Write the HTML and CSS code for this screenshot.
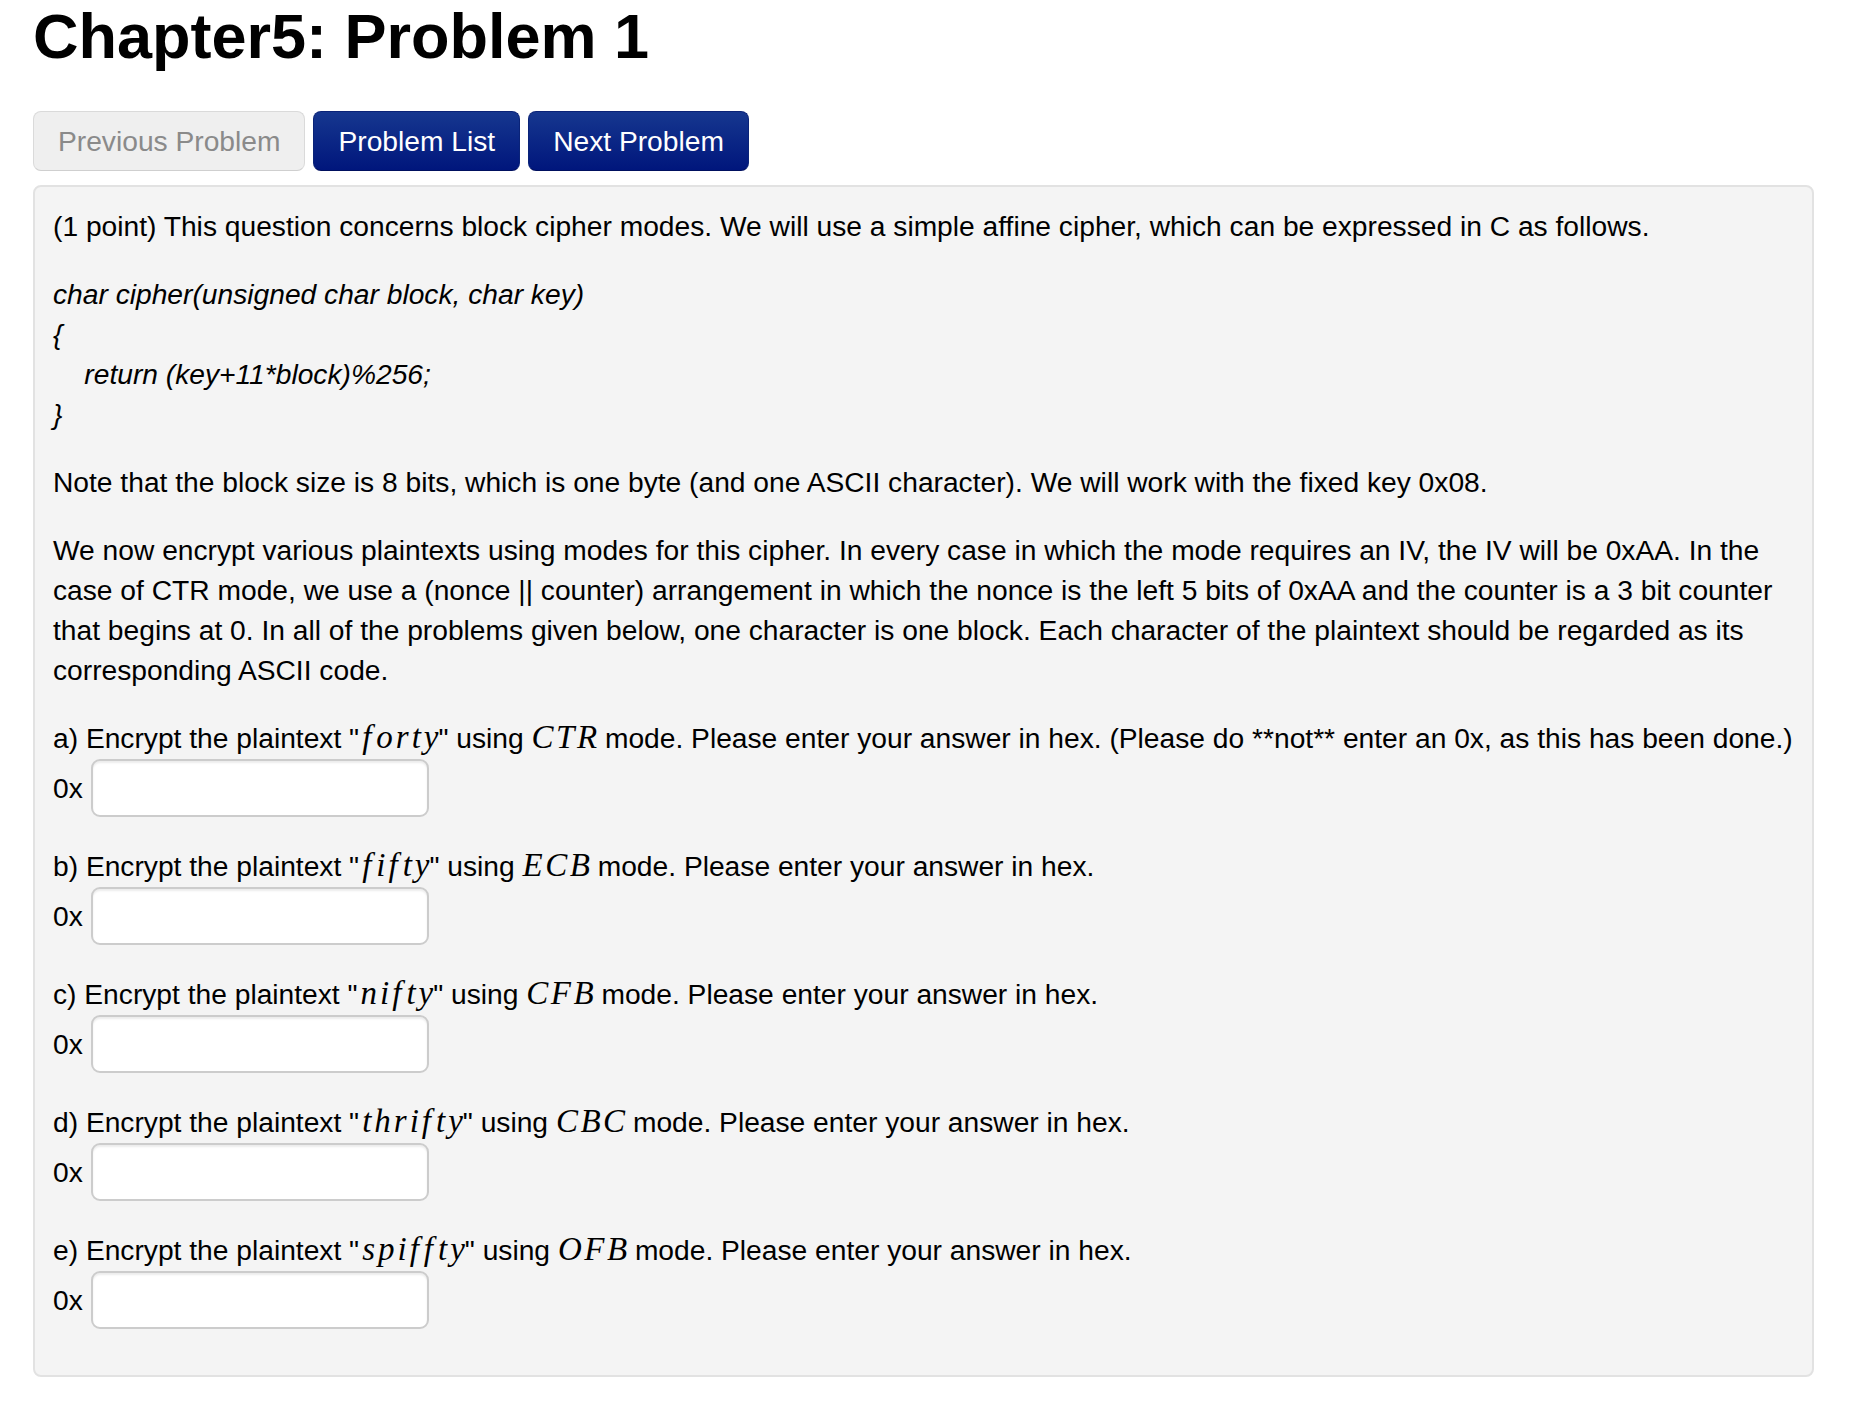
FILE: index.html
```html
<!DOCTYPE html>
<html lang="en">
<head>
<meta charset="utf-8">
<title>Chapter5: Problem 1</title>
<link rel="stylesheet" href="styles.css">
</head>
<body>
<div class="page">
  <h1 class="title">Chapter5: Problem 1</h1>
  <div class="nav">
    <span class="btn btn-disabled">Previous Problem</span>
    <a class="btn btn-primary" href="#">Problem List</a>
    <a class="btn btn-primary" href="#">Next Problem</a>
  </div>
  <div class="well">
    <p class="para">(1 point) This question concerns block cipher modes. We will use a simple affine cipher, which can be expressed in C as follows.</p>
    <p class="para code">char cipher(unsigned char block, char key)<br>{<br>&nbsp;&nbsp;&nbsp;&nbsp;return (key+11*block)%256;<br>}</p>
    <p class="para">Note that the block size is 8 bits, which is one byte (and one ASCII character). We will work with the fixed key 0x08.</p>
    <p class="para">We now encrypt various plaintexts using modes for this cipher. In every case in which the mode requires an IV, the IV will be 0xAA. In the case of CTR mode, we use a (nonce || counter) arrangement in which the nonce is the left 5 bits of 0xAA and the counter is a 3 bit counter that begins at 0. In all of the problems given below, one character is one block. Each character of the plaintext should be regarded as its corresponding ASCII code.</p>

    <div class="part">
      <div class="question">a) Encrypt the plaintext "<span class="math word"><span class="f">f</span>orty</span>" using <span class="math mode">CTR</span> mode. Please enter your answer in hex. (Please do **not** enter an 0x, as this has been done.)</div>
      <div class="answer"><span class="prefix">0x</span><input class="field" type="text"></div>
    </div>
    <div class="part">
      <div class="question">b) Encrypt the plaintext "<span class="math word"><span class="f">f</span>i<span class="f">f</span>ty</span>" using <span class="math mode">ECB</span> mode. Please enter your answer in hex.</div>
      <div class="answer"><span class="prefix">0x</span><input class="field" type="text"></div>
    </div>
    <div class="part">
      <div class="question">c) Encrypt the plaintext "<span class="math word">ni<span class="f">f</span>ty</span>" using <span class="math mode">CFB</span> mode. Please enter your answer in hex.</div>
      <div class="answer"><span class="prefix">0x</span><input class="field" type="text"></div>
    </div>
    <div class="part">
      <div class="question">d) Encrypt the plaintext "<span class="math word">thri<span class="f">f</span>ty</span>" using <span class="math mode">CBC</span> mode. Please enter your answer in hex.</div>
      <div class="answer"><span class="prefix">0x</span><input class="field" type="text"></div>
    </div>
    <div class="part">
      <div class="question">e) Encrypt the plaintext "<span class="math word">spi<span class="f">f</span><span class="f">f</span>ty</span>" using <span class="math mode">OFB</span> mode. Please enter your answer in hex.</div>
      <div class="answer"><span class="prefix">0x</span><input class="field" type="text"></div>
    </div>
  </div>
</div>
</body>
</html>
```
FILE: styles.css
```css
html, body {
  margin: 0;
  padding: 0;
  background: #ffffff;
}

body {
  font-family: "Liberation Sans", Arial, Helvetica, sans-serif;
  color: #000;
}

.page {
  width: 1781px;
  padding: 0 0 0 33px;
}

.title {
  margin: 0;
  font-size: 63px;
  font-weight: bold;
  line-height: normal;
  color: #000;
}

.nav {
  display: flex;
  gap: 8px;
  margin-top: 39px;
}

.btn {
  display: inline-block;
  font-size: 28.2px;
  line-height: 40px;
  padding: 9px 24px;
  border: 1px solid;
  border-radius: 8px;
  text-decoration: none;
}

.btn-disabled {
  background: #efefef;
  color: #8a8a8a;
  border-color: #dadada #dadada #cfcfcf;
}

.btn-primary {
  background: linear-gradient(#16378f, #00167c);
  color: #fff;
  border-color: #0a2378 #0a2378 #00105e;
}

.well {
  margin-top: 14px;
  background: #f4f4f4;
  border: 2px solid #e2e2e2;
  border-radius: 8px;
  padding: 19px 18px 17px;
  font-size: 28.2px;
  line-height: 40px;
}

.para {
  margin: 0 0 28px;
}

.code {
  font-style: italic;
}

.part {
  margin-bottom: 28px;
}

.question {
  height: 40px;
  white-space: nowrap;
}

.math {
  font-family: "Liberation Serif", "Times New Roman", serif;
  font-style: italic;
  font-size: 33px;
  line-height: 1;
}

.math.mode {
  letter-spacing: 2.5px;
  margin-right: -2.5px;
}

.math.word {
  letter-spacing: 3px;
  margin-left: 3px;
  margin-right: -3px;
}

.math .f {
  margin-right: 2px;
}

.answer {
  display: flex;
  align-items: center;
  height: 60px;
  gap: 8px;
}

.field {
  box-sizing: border-box;
  width: 338px;
  height: 58px;
  margin: 0;
  padding: 8px 12px;
  font: inherit;
  background: #fff;
  border: 2px solid #cccccc;
  border-radius: 9px;
  box-shadow: inset 0 2px 2px rgba(0, 0, 0, 0.075);
}
```
